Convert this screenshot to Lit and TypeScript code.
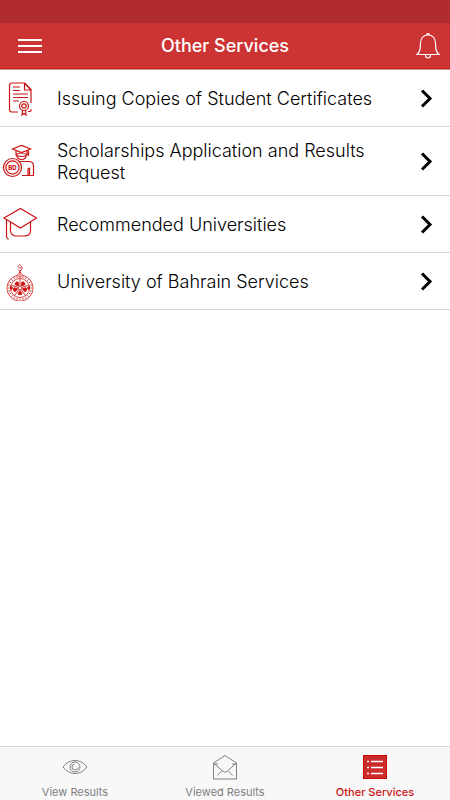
import { LitElement, html, svg, css, nothing } from "lit";
import { customElement } from "lit/decorators.js";
import { classMap } from "lit/directives/class-map.js";

const certificateIcon = svg`
  <svg class="icon" viewBox="0 0 40 40" aria-hidden="true">
    <path d="M18 34H12Q9.500 34 9.500 31.500V7.500Q9.500 5 12 5H24.500L31 11.500V25" />
    <path d="M24.500 5V12H31M24.500 5L31 12" />
    <path d="M13 9H20M13 12.500H20M13 16H28M13 19.500H28M13 23H19" />
    <circle cx="24" cy="28" r="4.500" />
    <circle cx="24" cy="28" r="2.200" />
    <path d="M22.500 32L22 37L24 35.500L26 37L25.500 32M28 33.500H30Q31 33.500 31 31" />
  </svg>`;

const scholarshipIcon = svg`
  <svg class="icon" viewBox="0 0 40 40" aria-hidden="true">
    <path d="M12.500 8L21.500 4.500L30.500 8L21.500 11.500Z" />
    <path d="M16 10V13.500Q21.500 10.500 27 13.500V10M16.500 13.500Q17 18.500 21.500 18.500Q26 18.500 26.500 13.500M17 14.500Q21.500 16.500 26 14.500M28.500 9.500V15" />
    <path d="M22 34.500H33.500V25Q33.500 20.500 29 20.500H19M28 34.500V28Q28 27 29.500 27V34.500" />
    <circle cx="12.500" cy="26.500" r="9" />
    <circle cx="12.500" cy="26.500" r="6.600" />
    <text class="coin" x="12.500" y="29" text-anchor="middle">BD</text>
  </svg>`;

const capIcon = svg`
  <svg class="icon" viewBox="0 0 40 40" aria-hidden="true">
    <path d="M4 14L20.500 4.500L36.500 14L20.500 24Z" />
    <path d="M10.500 18V27Q11 32 17 32H24Q30.500 32 30.500 27V18M6.500 16V33L8.500 35.500" />
  </svg>`;

const petals = [0, 72, 144, 216, 288];
const beads = Array.from({ length: 24 }, (_, i) => i * 15);
const sealIcon = svg`
  <svg class="icon fine" viewBox="0 0 40 40" aria-hidden="true">
    <path d="M20 11Q18.500 14.500 12.500 16.500A13 13 0 1 0 27.500 16.500Q21.500 14.500 20 11Z" />
    <path d="M20 3L18 5.500L20 7.500L21.500 5.500M20.500 4.500L22.500 7L20 10.500L18.500 8.500M20 9V15M17.500 14L20 16.500L22.500 14" />
    <circle cx="20" cy="27" r="9.500" />
    ${beads.map(
      (a) => svg`<path d="M20 16.500V14.800" transform="rotate(${a} 20 27)" />`,
    )}
    ${petals.map(
      (a) => svg`<g transform="rotate(${a} 20 27)">
        <path class="solid" d="M20 29.500L22 32.500L21 34L20 33.200L19 34L18 32.500Z" />
        <path d="M20 25V18" />
      </g>`,
    )}
    <path class="solid" d="M10.500 25L13 27L10.500 29ZM29.500 25L27 27L29.500 29Z" />
    <circle cx="20" cy="27" r="1.800" />
  </svg>`;

const eyeIcon = svg`
  <svg class="tab-icon" viewBox="0 0 26 26" aria-hidden="true">
    <path d="M1 13Q6 6.500 13 6.500T25 13Q20 19.500 13 19.500T1 13Z" />
    <circle cx="13" cy="13" r="5" />
    <path d="M12.500 10A3 3 0 1 0 16 13.500" />
  </svg>`;

const envelopeIcon = svg`
  <svg class="tab-icon" viewBox="0 0 26 26" aria-hidden="true">
    <path d="M1.500 9L13 1.500L24.500 9V25H1.500ZM1.500 9L10.500 17Q13 19.500 15.500 17L24.500 9" />
    <path d="M5.500 21.500L9.500 17M20.500 21.500L16.500 17M2 10H6M24 10H20" />
  </svg>`;

const listIcon = svg`
  <svg class="tab-icon" viewBox="0 0 26 26" aria-hidden="true">
    <rect class="tile" x="1.500" y="1.500" width="23" height="23" />
    <path class="lines" d="M5 7.500H7M9 7.500H21M5 13.500H7M9 13.500H21M5 19.500H7M9 19.500H21" />
  </svg>`;

const services = [
  { label: "Issuing Copies of Student Certificates", icon: certificateIcon },
  { label: "Scholarships Application and Results Request", icon: scholarshipIcon },
  { label: "Recommended Universities", icon: capIcon },
  { label: "University of Bahrain Services", icon: sealIcon },
];

const tabs = [
  { label: "View Results", icon: eyeIcon, active: false },
  { label: "Viewed Results", icon: envelopeIcon, active: false },
  { label: "Other Services", icon: listIcon, active: true },
];

@customElement("app-root")
export class AppRoot extends LitElement {
  static styles = css`
    :host {
      display: flex;
      flex-direction: column;
      min-height: 100vh;
      background: #fff;
      color: #000;
      font-family: Inter, "Liberation Sans", sans-serif;
    }
    * {
      box-sizing: border-box;
    }
    svg {
      display: block;
      fill: none;
    }
    .status {
      height: 23px;
      background: #b12c2c;
    }
    .bar {
      display: grid;
      grid-template-columns: 60px 1fr 60px;
      align-items: center;
      height: 47px;
      background: #cc3333;
      border-bottom: 1px solid #c99;
      box-shadow: inset 0 -1px #d01818;
    }
    .bar-button {
      display: flex;
      align-items: center;
      justify-content: center;
      height: 44px;
      padding: 0;
      border: 0;
      background: none;
      stroke: #fff;
    }
    .bell {
      justify-content: flex-end;
      padding-right: 9px;
    }
    h1 {
      margin: 0;
      color: #fff;
      font-size: 18px;
      font-weight: 500;
      line-height: 22px;
      text-align: center;
    }
    main {
      flex: 1;
    }
    ul {
      margin: 0;
      padding: 0;
      list-style: none;
    }
    .row {
      display: flex;
      align-items: center;
      min-height: 57px;
      padding: 13px 15px 11px 0;
      border-bottom: 1px solid #d6d6d6;
      color: inherit;
      text-decoration: none;
      font-size: 18px;
      line-height: 22px;
    }
    .icon {
      flex: none;
      width: 40px;
      height: 40px;
      margin: -5px 17px -3px 0;
      stroke: #cc1414;
      stroke-width: 1.2;
    }
    .fine {
      stroke-width: 0.8;
    }
    .solid {
      fill: #cc1414;
    }
    .coin {
      fill: #cc1414;
      stroke: none;
      font-size: 6px;
      font-weight: 800;
    }
    .label {
      flex: 1;
      padding-right: 24px;
      font-weight: 300;
    }
    .chevron {
      flex: none;
      stroke: #000;
      stroke-width: 3;
    }
    nav {
      display: grid;
      grid-template-columns: repeat(3, 1fr);
      height: 54px;
      background: #f8f8f8;
      border-top: 1px solid #d9d9d9;
    }
    .tab {
      display: flex;
      flex-direction: column;
      align-items: center;
      gap: 4px;
      padding-top: 7px;
      color: #808080;
      font-size: 11px;
      line-height: 16px;
      text-decoration: none;
    }
    .tab-icon {
      width: 26px;
      height: 26px;
      stroke: #808080;
    }
    .active {
      color: #cc1414;
      font-weight: 500;
    }
    .tile {
      fill: #cc2b2b;
      stroke: #c80808;
    }
    .lines {
      stroke: #fff;
      stroke-width: 1.4;
    }
  `;

  render() {
    return html`
      <div class="status"></div>
      <header class="bar">
        <button class="bar-button" type="button" aria-label="Menu">
          <svg width="24" height="16" viewBox="0 0 24 16" stroke-width="2">
            <path d="M0 2H24M0 8H24M0 14H24" />
          </svg>
        </button>
        <h1>Other Services</h1>
        <button class="bar-button bell" type="button" aria-label="Notifications">
          <svg width="26" height="28" viewBox="0 0 26 28" stroke-width="1.2">
            <path d="M2 22.500Q5 20 5.200 16L5.500 11Q6 3 13 3T20.500 11L20.800 16Q21 20 24 22.500ZM11.500 3Q11.500 1.500 13 1.500T14.500 3M10.500 23Q10.500 26 13 26T15.500 23" />
          </svg>
        </button>
      </header>
      <main>
        <ul>
          ${services.map(
            (s) => html`<li>
              <a class="row" href="#">
                ${s.icon}
                <span class="label">${s.label}</span>
                <svg class="chevron" width="16" height="22" viewBox="0 0 16 22" aria-hidden="true">
                  <path d="M3 2.500L11 10.500L3 18.500" />
                </svg>
              </a>
            </li>`,
          )}
        </ul>
      </main>
      <nav>
        ${tabs.map(
          (t) => html`<a
            class=${classMap({ tab: true, active: t.active })}
            href="#"
            aria-current=${t.active ? "page" : nothing}
            >${t.icon}<span>${t.label}</span></a
          >`,
        )}
      </nav>
    `;
  }
}
